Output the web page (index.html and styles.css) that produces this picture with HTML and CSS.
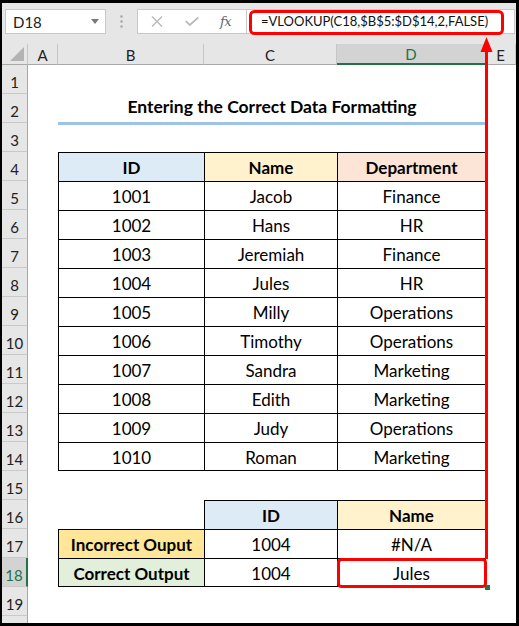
FILE: index.html
```html
<!DOCTYPE html>
<html>
<head>
<meta charset="utf-8">
<title>Entering the Correct Data Formatting</title>
<link rel="stylesheet" href="styles.css">
</head>
<body>
<div class="frame">
  <div class="fbar">
    <div class="namebox"><span>D18</span>
      <svg class="caret" width="8" height="5" viewBox="0 0 8 5"><path d="M0 0H8L4 5Z" fill="#7a7a7a"/></svg>
    </div>
    <div class="dots">
      <svg width="3" height="13" viewBox="0 0 3 13"><circle cx="1.5" cy="1.5" r="1.2" fill="#a6a6a6"/><circle cx="1.5" cy="6.5" r="1.2" fill="#a6a6a6"/><circle cx="1.5" cy="11.5" r="1.2" fill="#a6a6a6"/></svg>
    </div>
    <div class="ficons">
      <svg class="ic-x" width="12" height="11" viewBox="0 0 12 11"><path d="M1 0.5L11 10.5M11 0.5L1 10.5" stroke="#b9b9b9" stroke-width="1.4" fill="none"/></svg>
      <svg class="ic-ok" width="14" height="9" viewBox="0 0 14 9"><path d="M0.8 4.2L4.8 8L13.2 0.6" stroke="#b9b9b9" stroke-width="1.8" fill="none"/></svg>
      <span class="fx">fx</span>
    </div>
    <div class="finput">=VLOOKUP(C18,$B$5:$D$14,2,FALSE)</div>
  </div>

  <div class="sheet">
    <div class="r hdr">
      <div class="corner"><svg width="14" height="14" viewBox="0 0 14 14"><path d="M14 0V14H0Z" fill="#b3b3b3"/></svg></div>
      <div class="ch">A</div><div class="ch">B</div><div class="ch">C</div><div class="ch sel">D</div><div class="ch">E</div>
    </div>

    <div class="r"><div class="rh">1</div><div class="c"></div><div class="c"></div><div class="c"></div><div class="c"></div><div class="c"></div></div>
    <div class="r tr"><div class="rh">2</div><div class="c"></div><div class="c title">Entering the Correct Data Formatting</div><div class="c"></div></div>
    <div class="r"><div class="rh">3</div><div class="c"></div><div class="c"></div><div class="c"></div><div class="c"></div><div class="c"></div></div>

    <div class="r"><div class="rh">4</div><div class="c"></div>
      <div class="c t l bold blue">ID</div><div class="c t l bold yellow">Name</div><div class="c t l rr bold peach">Department</div><div class="c"></div></div>
    <div class="r"><div class="rh">5</div><div class="c"></div><div class="c t l">1001</div><div class="c t l">Jacob</div><div class="c t l rr">Finance</div><div class="c"></div></div>
    <div class="r"><div class="rh">6</div><div class="c"></div><div class="c t l">1002</div><div class="c t l">Hans</div><div class="c t l rr">HR</div><div class="c"></div></div>
    <div class="r"><div class="rh">7</div><div class="c"></div><div class="c t l">1003</div><div class="c t l">Jeremiah</div><div class="c t l rr">Finance</div><div class="c"></div></div>
    <div class="r"><div class="rh">8</div><div class="c"></div><div class="c t l">1004</div><div class="c t l">Jules</div><div class="c t l rr">HR</div><div class="c"></div></div>
    <div class="r"><div class="rh">9</div><div class="c"></div><div class="c t l">1005</div><div class="c t l">Milly</div><div class="c t l rr">Operations</div><div class="c"></div></div>
    <div class="r"><div class="rh">10</div><div class="c"></div><div class="c t l">1006</div><div class="c t l">Timothy</div><div class="c t l rr">Operations</div><div class="c"></div></div>
    <div class="r"><div class="rh">11</div><div class="c"></div><div class="c t l">1007</div><div class="c t l">Sandra</div><div class="c t l rr">Marketing</div><div class="c"></div></div>
    <div class="r"><div class="rh">12</div><div class="c"></div><div class="c t l">1008</div><div class="c t l">Edith</div><div class="c t l rr">Marketing</div><div class="c"></div></div>
    <div class="r"><div class="rh">13</div><div class="c"></div><div class="c t l">1009</div><div class="c t l">Judy</div><div class="c t l rr">Operations</div><div class="c"></div></div>
    <div class="r"><div class="rh">14</div><div class="c"></div><div class="c t l bb">1010</div><div class="c t l bb">Roman</div><div class="c t l rr bb">Marketing</div><div class="c"></div></div>

    <div class="r"><div class="rh">15</div><div class="c"></div><div class="c"></div><div class="c"></div><div class="c"></div><div class="c"></div></div>
    <div class="r"><div class="rh">16</div><div class="c"></div><div class="c"></div><div class="c t l bold blue">ID</div><div class="c t l rr bold yellow">Name</div><div class="c"></div></div>
    <div class="r"><div class="rh">17</div><div class="c"></div><div class="c t l bold gold">Incorrect Ouput</div><div class="c t l">1004</div><div class="c t l rr">#N/A</div><div class="c"></div></div>
    <div class="r"><div class="rh sel">18</div><div class="c"></div><div class="c t l bb bold green">Correct Output</div><div class="c t l bb">1004</div><div class="c t l rr bb">Jules</div><div class="c"></div></div>
    <div class="r"><div class="rh">19</div><div class="c"></div><div class="c"></div><div class="c"></div><div class="c"></div><div class="c"></div></div>
    <div class="r"><div class="rh"></div><div class="c"></div><div class="c"></div><div class="c"></div><div class="c"></div><div class="c"></div></div>
  </div>
</div>

<svg class="overlay" width="519" height="626" viewBox="0 0 519 626">
  <rect x="485" y="585" width="5" height="5" fill="#217346"/>
  <rect x="250.5" y="11.5" width="252" height="22" rx="4" fill="none" stroke="#ff0000" stroke-width="3"/>
  <rect x="338.5" y="559.5" width="147" height="27" rx="3" fill="none" stroke="#ff0000" stroke-width="3"/>
  <line x1="486.5" y1="50" x2="486.5" y2="559" stroke="#ff0000" stroke-width="3"/>
  <path d="M486.5 37L480.5 52H492.5Z" fill="#ff0000"/>
</svg>
</body>
</html>
```

FILE: styles.css
```css
html, body {
  margin: 0;
  padding: 0;
  background: #000;
}
body {
  position: relative;
  width: 519px;
  height: 626px;
  overflow: hidden;
  font-family: Lato, "Open Sans", sans-serif;
  color: #000;
}
.frame {
  position: relative;
  width: 514px;
  height: 620px;
  margin: 3px 0 0 2px;
  background: #fff;
  overflow: hidden;
}

/* formula bar */
.fbar {
  height: 41px;
  background: #e6e6e6;
  display: flex;
  align-items: flex-start;
  padding-top: 6px;
  box-sizing: border-box;
}
.namebox {
  margin-left: 3px;
  width: 101px;
  height: 25px;
  background: #fff;
  border: 1px solid #c8c8c8;
  box-sizing: border-box;
  display: flex;
  align-items: center;
  justify-content: space-between;
  padding: 0 6px 0 7px;
  font-size: 15px;
  color: #222;
}
.dots {
  width: 31px;
  height: 25px;
  display: flex;
  align-items: center;
  justify-content: center;
}
.ficons {
  width: 110px;
  height: 25px;
  background: #fff;
  border: 1px solid #c8c8c8;
  box-sizing: border-box;
  display: flex;
  align-items: center;
  padding-left: 13px;
}
.ic-x { margin-right: 22px; }
.ic-ok { margin-right: 21px; }
.fx {
  font-family: "DejaVu Serif", "Liberation Serif", serif;
  font-style: italic;
  font-size: 13px;
  color: #666;
  letter-spacing: -0.5px;
}
.finput {
  flex: 1;
  height: 25px;
  background: #fff;
  border: 1px solid #c8c8c8;
  border-left: none;
  box-sizing: border-box;
  margin-right: 1px;
  padding-left: 14px;
  font-size: 13px;
  line-height: 23px;
  color: #111;
  white-space: nowrap;
  overflow: hidden;
}

/* sheet */
.r {
  display: grid;
  grid-template-columns: 26px 30px 146px 133px 149px 30px;
  height: 29px;
}
.r.hdr { height: 21px; }
.r.tr { grid-template-columns: 26px 30px 428px 30px; }

.corner {
  background: #e6e6e6;
  border-right: 1px solid #c6c6c6;
  border-bottom: 1px solid #a8a8a8;
  box-sizing: border-box;
  display: flex;
  align-items: flex-end;
  justify-content: flex-end;
  padding: 0 3px 3px 0;
}
.ch {
  background: #e6e6e6;
  border-right: 1px solid #c6c6c6;
  border-bottom: 1px solid #a8a8a8;
  box-sizing: border-box;
  display: flex;
  align-items: center;
  justify-content: center;
  font-size: 15px;
  color: #222;
  padding-top: 1px;
}
.ch.sel {
  background: #d3d3d3;
  color: #217346;
  border-bottom: 2px solid #217346;
}
.rh {
  background: #e6e6e6;
  border-right: 1px solid #a8a8a8;
  border-bottom: 1px solid #c9c9c9;
  box-sizing: border-box;
  display: flex;
  align-items: flex-end;
  justify-content: center;
  font-size: 15px;
  color: #222;
  padding-bottom: 2px;
}
.rh.sel {
  background: #d3d3d3;
  color: #217346;
  border-right: 2px solid #217346;
}

.c {
  box-sizing: border-box;
  display: flex;
  align-items: flex-end;
  justify-content: center;
  font-size: 17px;
  line-height: 20px;
  padding-bottom: 3px;
  white-space: nowrap;
}
.title {
  font-weight: 700;
  font-size: 17.5px;
  border-bottom: 3px solid #9dc3e6;
  margin-bottom: -2px;
  padding-bottom: 5px;
}
.bold { font-weight: 700; }
.t { border-top: 1px solid #000; }
.l { border-left: 1px solid #000; }
.rr { border-right: 1px solid #000; }
.bb { border-bottom: 1px solid #000; padding-bottom: 2px; }

.blue { background: #ddebf7; }
.yellow { background: #fff2cc; }
.peach { background: #fce4d6; }
.gold { background: #ffe699; }
.green { background: #e2efda; }

.overlay {
  position: absolute;
  left: 0;
  top: 0;
  pointer-events: none;
}
```
